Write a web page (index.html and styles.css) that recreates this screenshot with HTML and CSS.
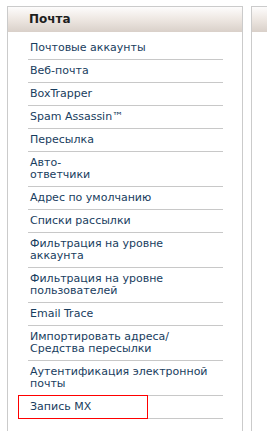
FILE: index.html
```html
<!DOCTYPE html>
<html lang="ru">
<head>
    <meta charset="UTF-8">
    <meta name="viewport" content="width=device-width, initial-scale=1.0">
    <title>Почта</title>
    <link rel="stylesheet" href="styles.css">
</head>
<body>
    <div class="columns">
        <div class="panel">
            <div class="panel-header">Почта</div>
            <ul class="menu">
                <li><a href="#">Почтовые аккаунты</a></li>
                <li><a href="#">Веб-почта</a></li>
                <li><a href="#">BoxTrapper</a></li>
                <li><a href="#">Spam Assassin™</a></li>
                <li><a href="#">Пересылка</a></li>
                <li><a href="#">Авто-<br>ответчики</a></li>
                <li><a href="#">Адрес по умолчанию</a></li>
                <li><a href="#">Списки рассылки</a></li>
                <li><a href="#">Фильтрация на уровне<br>аккаунта</a></li>
                <li><a href="#">Фильтрация на уровне<br>пользователей</a></li>
                <li><a href="#">Email Trace</a></li>
                <li><a href="#">Импортировать адреса/<br>Средства пересылки</a></li>
                <li><a href="#">Аутентификация электронной<br>почты</a></li>
                <li class="marked"><a href="#">Запись MX</a></li>
            </ul>
        </div>
        <div class="panel panel-next">
            <div class="panel-header"></div>
        </div>
    </div>
</body>
</html>
```

FILE: styles.css
```css
body {
    margin: 0;
    background: #fff;
    font-family: "DejaVu Sans", Verdana, sans-serif;
    overflow: hidden;
}

.columns {
    display: flex;
    gap: 8px;
    height: 100vh;
    box-sizing: border-box;
    padding: 6px 0 0 7px;
    overflow: hidden;
}

.panel {
    flex: 0 0 236px;
    box-sizing: border-box;
    border: 1px solid #cbcbcb;
    border-bottom: none;
    background: #fff;
}

.panel-next {
    flex: 1 1 0;
    min-width: 0;
    border-right: none;
}

.panel-header {
    height: 25px;
    line-height: 25px;
    padding-left: 21px;
    font-size: 12px;
    font-weight: bold;
    color: #1e1e1e;
    background: linear-gradient(to bottom, #fdfcfc 0%, #efe9e4 45%, #d9d0c9 100%);
}

.menu {
    list-style: none;
    margin: 5px 0 0 20px;
    padding: 0;
    width: 195px;
}

.menu li {
    position: relative;
    padding: 5px 0 5px 2px;
    border-bottom: 1px solid #c8c8c8;
    font-size: 11px;
    line-height: 12px;
}

.menu a {
    color: #183d5e;
    text-decoration: none;
}

/* red frame around the current item */
.marked::after {
    content: "";
    position: absolute;
    left: -10px;
    top: -1px;
    width: 128px;
    height: 22px;
    border: 1px solid #f00;
}
```
